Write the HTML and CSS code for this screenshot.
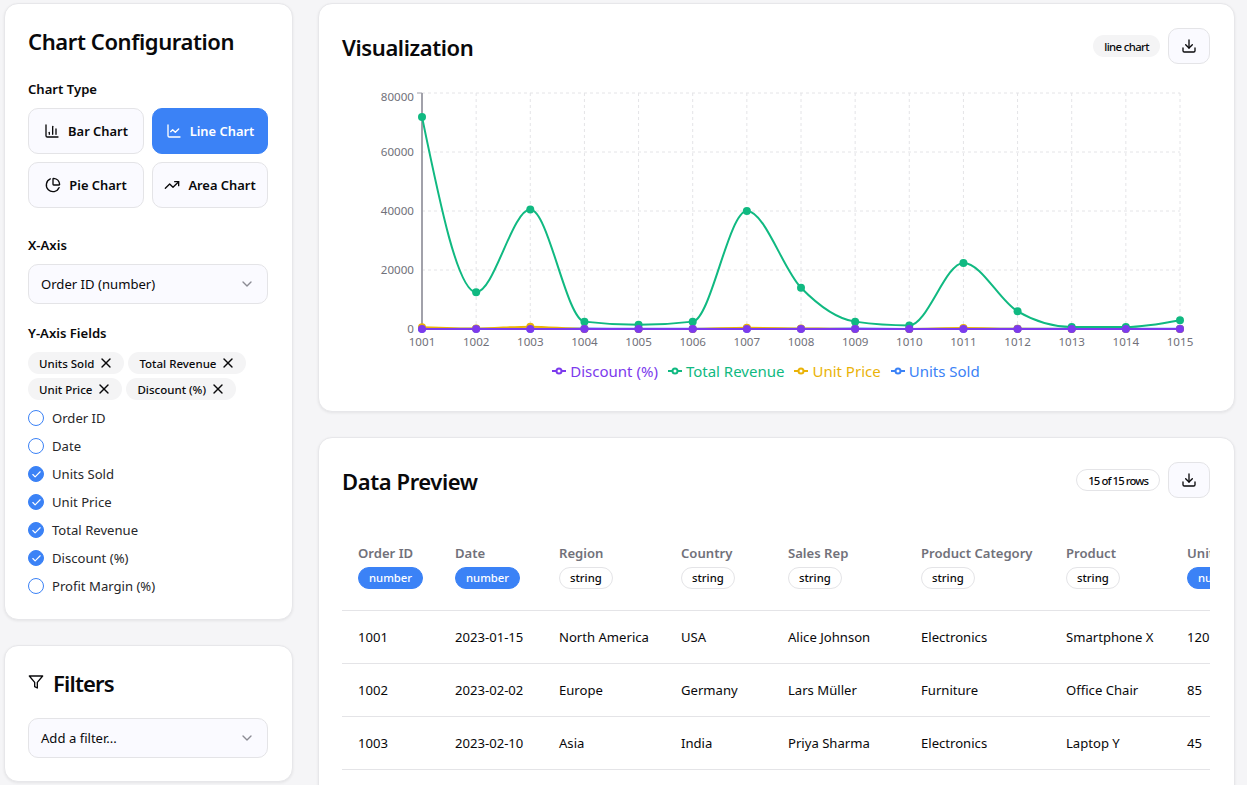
FILE: index.html
```html
<!DOCTYPE html>
<html lang="en">

<head>
  <meta charset="UTF-8">
  <meta name="viewport" content="width=device-width, initial-scale=1.0">
  <title>Chart Builder</title>
  <link rel="stylesheet" href="styles.css">
</head>

<body>
  <div class="page">
    <aside class="sidebar">
      <section class="card config">
        <h2 class="title">Chart Configuration</h2>

        <p class="label label-first">Chart Type</p>
        <div class="type-grid">
          <button class="type-btn">
            <svg class="icon" viewBox="0 0 24 24"><path d="M3 3v16a2 2 0 0 0 2 2h16"/><path d="M18 17V9"/><path d="M13 17V5"/><path d="M8 17v-3"/></svg>
            Bar Chart
          </button>
          <button class="type-btn active">
            <svg class="icon" viewBox="0 0 24 24"><path d="M3 3v16a2 2 0 0 0 2 2h16"/><path d="m19 9-5 5-4-4-3 3"/></svg>
            Line Chart
          </button>
          <button class="type-btn">
            <svg class="icon" viewBox="0 0 24 24"><path d="M21 12c.552 0 1.005-.449.95-.998a10 10 0 0 0-8.953-8.951c-.55-.055-.998.398-.998.95v8a1 1 0 0 0 1 1z"/><path d="M21.21 15.89A10 10 0 1 1 8 2.83"/></svg>
            Pie Chart
          </button>
          <button class="type-btn">
            <svg class="icon" viewBox="0 0 24 24"><polyline points="22 7 13.5 15.5 8.5 10.5 2 17"/><polyline points="16 7 22 7 22 13"/></svg>
            Area Chart
          </button>
        </div>

        <p class="label label-x">X-Axis</p>
        <div class="select">
          <span>Order ID (number)</span>
          <svg class="icon chevron" viewBox="0 0 24 24"><path d="m6 9 6 6 6-6"/></svg>
        </div>

        <p class="label label-y">Y-Axis Fields</p>
        <div class="chips">
          <span class="chip">Units Sold <svg class="icon" viewBox="0 0 24 24"><path d="M18 6 6 18"/><path d="m6 6 12 12"/></svg></span>
          <span class="chip">Total Revenue <svg class="icon" viewBox="0 0 24 24"><path d="M18 6 6 18"/><path d="m6 6 12 12"/></svg></span>
          <span class="chip">Unit Price <svg class="icon" viewBox="0 0 24 24"><path d="M18 6 6 18"/><path d="m6 6 12 12"/></svg></span>
          <span class="chip">Discount (%) <svg class="icon" viewBox="0 0 24 24"><path d="M18 6 6 18"/><path d="m6 6 12 12"/></svg></span>
        </div>

        <ul class="fields">
          <li><span class="check"></span>Order ID</li>
          <li><span class="check"></span>Date</li>
          <li><span class="check on"><svg viewBox="0 0 24 24"><path d="M20 6 9 17l-5-5"/></svg></span>Units Sold</li>
          <li><span class="check on"><svg viewBox="0 0 24 24"><path d="M20 6 9 17l-5-5"/></svg></span>Unit Price</li>
          <li><span class="check on"><svg viewBox="0 0 24 24"><path d="M20 6 9 17l-5-5"/></svg></span>Total Revenue</li>
          <li><span class="check on"><svg viewBox="0 0 24 24"><path d="M20 6 9 17l-5-5"/></svg></span>Discount (%)</li>
          <li><span class="check"></span>Profit Margin (%)</li>
        </ul>
      </section>

      <section class="card filters">
        <h2 class="title filters-title">
          <svg class="icon" viewBox="0 0 24 24"><polygon points="22 3 2 3 10 12.46 10 19 14 21 14 12.46 22 3"/></svg>
          Filters
        </h2>
        <div class="select">
          <span>Add a filter...</span>
          <svg class="icon chevron" viewBox="0 0 24 24"><path d="m6 9 6 6 6-6"/></svg>
        </div>
      </section>
    </aside>

    <main class="content">
      <section class="card panel">
        <div class="panel-head">
          <h2 class="title">Visualization</h2>
          <div class="panel-tools">
            <span class="badge">line chart</span>
            <button class="dl-btn">
              <svg class="icon" viewBox="0 0 24 24"><path d="M21 15v4a2 2 0 0 1-2 2H5a2 2 0 0 1-2-2v-4"/><polyline points="7 10 12 15 17 10"/><line x1="12" y1="15" x2="12" y2="3"/></svg>
            </button>
          </div>
        </div>

        <svg id="chart" class="chart" viewBox="342 84 868 268"></svg>

        <div class="legend">
          <span class="legend-item purple"><svg viewBox="0 0 14 14"><path d="M0 7h14"/><circle cx="7" cy="7" r="2.5"/></svg>Discount (%)</span>
          <span class="legend-item green"><svg viewBox="0 0 14 14"><path d="M0 7h14"/><circle cx="7" cy="7" r="2.5"/></svg>Total Revenue</span>
          <span class="legend-item amber"><svg viewBox="0 0 14 14"><path d="M0 7h14"/><circle cx="7" cy="7" r="2.5"/></svg>Unit Price</span>
          <span class="legend-item blue"><svg viewBox="0 0 14 14"><path d="M0 7h14"/><circle cx="7" cy="7" r="2.5"/></svg>Units Sold</span>
        </div>
      </section>

      <section class="card panel preview">
        <div class="panel-head">
          <h2 class="title">Data Preview</h2>
          <div class="panel-tools">
            <span class="badge outline">15 of 15 rows</span>
            <button class="dl-btn">
              <svg class="icon" viewBox="0 0 24 24"><path d="M21 15v4a2 2 0 0 1-2 2H5a2 2 0 0 1-2-2v-4"/><polyline points="7 10 12 15 17 10"/><line x1="12" y1="15" x2="12" y2="3"/></svg>
            </button>
          </div>
        </div>

        <div class="table-wrap">
          <table class="data">
            <thead>
              <tr>
                <th>Order ID<span class="type num">number</span></th>
                <th>Date<span class="type num">number</span></th>
                <th>Region<span class="type">string</span></th>
                <th>Country<span class="type">string</span></th>
                <th>Sales Rep<span class="type">string</span></th>
                <th>Product Category<span class="type">string</span></th>
                <th>Product<span class="type">string</span></th>
                <th>Units Sold<span class="type num">number</span></th>
              </tr>
            </thead>
            <tbody>
              <tr>
                <td>1001</td><td>2023-01-15</td><td>North America</td><td>USA</td><td>Alice Johnson</td><td>Electronics</td><td>Smartphone X</td><td>120</td>
              </tr>
              <tr>
                <td>1002</td><td>2023-02-02</td><td>Europe</td><td>Germany</td><td>Lars Müller</td><td>Furniture</td><td>Office Chair</td><td>85</td>
              </tr>
              <tr>
                <td>1003</td><td>2023-02-10</td><td>Asia</td><td>India</td><td>Priya Sharma</td><td>Electronics</td><td>Laptop Y</td><td>45</td>
              </tr>
            </tbody>
          </table>
        </div>
      </section>
    </main>
  </div>
  <script src="chart.js"></script>
</body>

</html>
```

FILE: styles.css
```css
* {
  box-sizing: border-box;
}

html, body {
  margin: 0;
  height: 100%;
  overflow: hidden;
}

body {
  background: #f5f5f7;
  color: #09090b;
  font-family: "Noto Sans", "Open Sans", sans-serif;
  font-size: 13.1px;
}

button {
  font: inherit;
  color: inherit;
  cursor: pointer;
}

.icon {
  width: 16px;
  height: 16px;
  flex: none;
  fill: none;
  stroke: currentColor;
  stroke-width: 2;
  stroke-linecap: round;
  stroke-linejoin: round;
}

.page {
  display: grid;
  grid-template-columns: 289px 917px;
  gap: 25px;
  padding: 3px 0 0 4px;
  align-items: start;
}

.sidebar, .content {
  display: flex;
  flex-direction: column;
  gap: 25px;
}

.card {
  background: #fff;
  border: 1px solid #e7e7ea;
  border-radius: 14px;
  box-shadow: 0 1px 3px rgba(0, 0, 0, 0.07);
}

.title {
  margin: 0;
  font-size: 22px;
  line-height: 32px;
  font-weight: 600;
  letter-spacing: -0.4px;
}

/* sidebar */
.config {
  height: 617px;
  padding: 21px 24px 0 23px;
}

.label {
  margin: 0;
  font-size: 13.1px;
  line-height: 20px;
  font-weight: 600;
}

.label-first {
  margin-top: 22px;
}

.label-x {
  margin-top: 27px;
}

.label-y {
  margin-top: 19px;
}

.type-grid {
  display: grid;
  grid-template-columns: 116px 116px;
  gap: 8px;
  margin-top: 9px;
}

.type-btn {
  display: flex;
  align-items: center;
  justify-content: center;
  gap: 8px;
  height: 46px;
  padding: 0;
  background: #fafaff;
  border: 1px solid #e4e4e7;
  border-radius: 10px;
  font-size: 12.9px;
  font-weight: 600;
  white-space: nowrap;
}

.type-btn.active {
  background: #3b82f6;
  border-color: #3b82f6;
  color: #fff;
}

.select {
  display: flex;
  align-items: center;
  justify-content: space-between;
  width: 240px;
  height: 40px;
  margin-top: 9px;
  padding: 0 12px;
  background: #fafaff;
  border: 1px solid #e4e4e7;
  border-radius: 10px;
}

.chevron {
  color: #8b8b93;
}

.chips {
  display: flex;
  flex-wrap: wrap;
  gap: 4px;
  margin-top: 9px;
}

.chip {
  display: inline-flex;
  align-items: center;
  gap: 4px;
  height: 22px;
  padding: 0 10px 0 11px;
  background: #f4f4f5;
  border-radius: 11px;
  font-size: 11.5px;
  font-weight: 500;
  white-space: nowrap;
}

.fields {
  list-style: none;
  margin: 4px 0 0;
  padding: 0;
}

.fields li {
  display: flex;
  align-items: center;
  gap: 8px;
  height: 28px;
  color: #27272a;
}

.check {
  display: inline-flex;
  align-items: center;
  justify-content: center;
  width: 16px;
  height: 16px;
  border: 1px solid #3b82f6;
  border-radius: 50%;
}

.check.on {
  background: #3b82f6;
}

.check svg {
  width: 11px;
  height: 11px;
  fill: none;
  stroke: #fff;
  stroke-width: 2.5;
  stroke-linecap: round;
  stroke-linejoin: round;
}

.filters {
  height: 137px;
  padding: 21px 24px 0 23px;
}

.filters-title {
  display: flex;
  align-items: center;
  gap: 9px;
  letter-spacing: -0.8px;
}

.filters-title .icon {
  margin-top: -3px;
}

.filters .select {
  margin-top: 19px;
}

/* main panels */
.panel {
  padding: 24px 24px 0 23px;
}

.panel-head {
  display: flex;
  align-items: center;
  justify-content: space-between;
}

.panel-head .title {
  margin-top: 2px;
}

.panel-tools {
  display: flex;
  align-items: center;
  gap: 8px;
}

.badge {
  display: inline-flex;
  align-items: center;
  height: 22px;
  padding: 0 11px;
  background: #f4f4f5;
  border-radius: 11px;
  font-size: 11.3px;
  font-weight: 500;
  letter-spacing: -0.6px;
}

.badge.outline {
  background: #fff;
  border: 1px solid #e4e4e7;
  letter-spacing: -0.9px;
}

.dl-btn {
  display: flex;
  align-items: center;
  justify-content: center;
  width: 42px;
  height: 36px;
  padding: 0;
  background: #fafaff;
  border: 1px solid #e4e4e7;
  border-radius: 10px;
}

.chart {
  display: block;
  width: 868px;
  height: 268px;
  margin-top: 20px;
}

.chart text {
  font-size: 11.6px;
  fill: #71717a;
}

.legend {
  display: flex;
  justify-content: center;
  align-items: flex-start;
  gap: 10px;
  height: 59px;
  padding: 7px 20px 0 0;
  font-size: 15px;
  line-height: 24px;
}

.legend-item {
  display: inline-flex;
  align-items: center;
  gap: 4px;
}

.legend-item svg {
  width: 14px;
  height: 14px;
  fill: #fff;
  stroke: currentColor;
  stroke-width: 2;
}

.purple { color: #7c3aed; }
.green { color: #10b981; }
.amber { color: #eab308; }
.blue { color: #3b82f6; }

.preview {
  height: 380px;
}

.table-wrap {
  margin-top: 24px;
  overflow: hidden;
}

.data {
  border-collapse: collapse;
  table-layout: fixed;
  width: 988px;
}

.data th {
  height: 88px;
  padding: 2px 16px 0;
  border-bottom: 1px solid #e4e4e7;
  color: #71717a;
  font-weight: 600;
  text-align: left;
  white-space: nowrap;
}

.data th:nth-child(1) { width: 97px; }
.data th:nth-child(2) { width: 104px; }
.data th:nth-child(3) { width: 122px; }
.data th:nth-child(4) { width: 107px; }
.data th:nth-child(5) { width: 133px; }
.data th:nth-child(6) { width: 145px; }
.data th:nth-child(7) { width: 121px; }
.data th:nth-child(8) { width: 159px; }

.type {
  display: block;
  width: fit-content;
  height: 22px;
  margin-top: 5px;
  padding: 0 10px;
  background: #fff;
  border: 1px solid #e4e4e7;
  border-radius: 11px;
  color: #09090b;
  font-size: 11.3px;
  line-height: 20px;
  font-weight: 500;
}

.type.num {
  background: #3b82f6;
  border-color: #3b82f6;
  color: #fff;
}

.data td {
  height: 53px;
  padding: 0 16px;
  border-bottom: 1px solid #e4e4e7;
  white-space: nowrap;
}
```

FILE: chart.js
```js
// line chart, drawn in page-like coordinates (see viewBox on #chart)
const svg = document.getElementById("chart");
const NS = "http://www.w3.org/2000/svg";

const left = 422;
const step = (1180 - 422) / 14;
const zero = 329;
const perUnit = 236 / 80000;

const ids = [1001, 1002, 1003, 1004, 1005, 1006, 1007, 1008, 1009, 1010, 1011, 1012, 1013, 1014, 1015];

const series = [
  { color: "#3b82f6", data: [120, 85, 45, 150, 60, 90, 110, 70, 130, 40, 75, 95, 55, 65, 105] },
  { color: "#eab308", data: [600, 150, 800, 15, 25, 30, 400, 200, 20, 30, 300, 60, 15, 12, 30] },
  { color: "#10b981", data: [71900, 12500, 40500, 2500, 1400, 2500, 40000, 14000, 2500, 1200, 22400, 6000, 700, 700, 3000] },
  { color: "#7c3aed", data: [5, 10, 8, 3, 2, 5, 7, 4, 6, 2, 5, 3, 1, 2, 4] }
];

function add(name, attrs, text) {
  const el = document.createElementNS(NS, name);
  for (const key in attrs) el.setAttribute(key, attrs[key]);
  if (text !== undefined) el.textContent = text;
  svg.appendChild(el);
  return el;
}

// same curve as d3 monotoneX
function monotonePath(pts) {
  const n = pts.length;
  const slope = [];
  for (let i = 0; i < n - 1; i++) slope.push((pts[i + 1][1] - pts[i][1]) / step);
  const t = new Array(n).fill(0);
  for (let i = 1; i < n - 1; i++) {
    const a = slope[i - 1], b = slope[i];
    t[i] = (Math.sign(a) + Math.sign(b)) * Math.min(Math.abs(a), Math.abs(b), 0.25 * Math.abs(a + b)) || 0;
  }
  t[0] = (3 * slope[0] - t[1]) / 2;
  t[n - 1] = (3 * slope[n - 2] - t[n - 2]) / 2;
  let d = "M" + pts[0][0] + "," + pts[0][1];
  for (let i = 0; i < n - 1; i++) {
    const dx = step / 3;
    d += "C" + (pts[i][0] + dx) + "," + (pts[i][1] + dx * t[i]) + " " +
      (pts[i + 1][0] - dx) + "," + (pts[i + 1][1] - dx * t[i + 1]) + " " +
      pts[i + 1][0] + "," + pts[i + 1][1];
  }
  return d;
}

// grid
for (const v of [20000, 40000, 60000, 80000]) {
  const y = zero - v * perUnit;
  add("line", { x1: left, x2: 1180, y1: y, y2: y, stroke: "#e4e4e7", "stroke-dasharray": "3 3" });
}
ids.forEach((id, i) => {
  const x = left + i * step;
  if (i > 0) add("line", { x1: x, x2: x, y1: 93, y2: zero, stroke: "#e4e4e7", "stroke-dasharray": "3 3" });
  add("text", { x: x, y: 346, "text-anchor": "middle" }, id);
});

// axes
add("line", { x1: left, x2: left, y1: 93, y2: zero, stroke: "#a1a1aa", "stroke-width": 2 });
add("line", { x1: left, x2: 1180, y1: zero, y2: zero, stroke: "#a1a1aa", "stroke-width": 2 });
add("line", { x1: left - 5, x2: left, y1: 93, y2: 93, stroke: "#a1a1aa" });
for (const v of [0, 20000, 40000, 60000, 80000]) {
  const y = zero - v * perUnit;
  const shift = v === 80000 ? 8 : 4;
  add("text", { x: left - 8, y: y + shift, "text-anchor": "end" }, v);
}

// lines and dots
for (const s of series) {
  const pts = s.data.map((v, i) => [left + i * step, zero - v * perUnit]);
  add("path", { d: monotonePath(pts), fill: "none", stroke: s.color, "stroke-width": 2 });
  for (const p of pts) add("circle", { cx: p[0], cy: p[1], r: 4, fill: s.color });
}
```
